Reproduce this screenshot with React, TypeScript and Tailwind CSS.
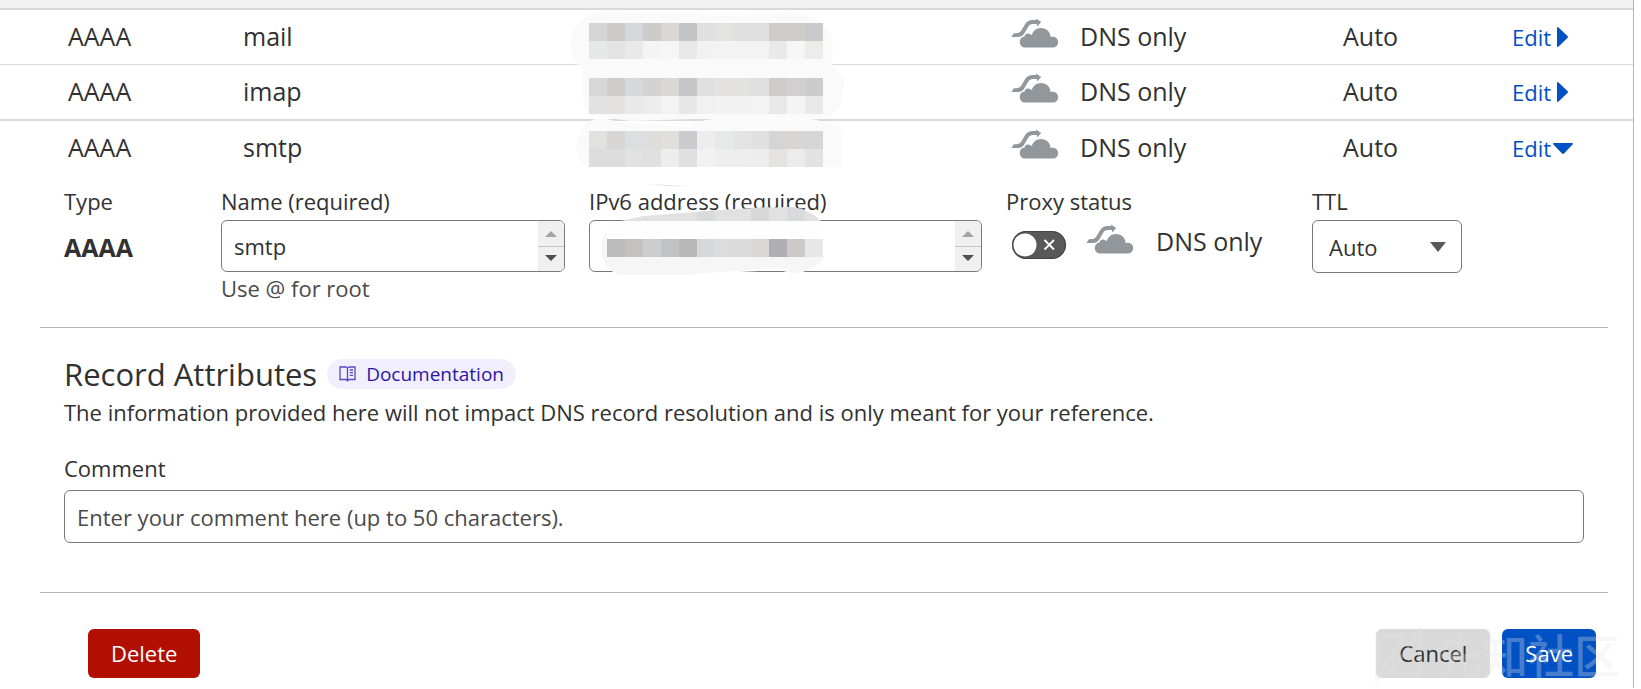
import React from "react";

type RecordRow = {
  type: string;
  name: string;
  tiles: string[][];
  halo: string;
  open: boolean;
};

const records: RecordRow[] = [
  {
    type: "AAAA",
    name: "mail",
    open: false,
    tiles: [
      ["#d3d6d5", "#cdcbca", "#d5d7da", "#cdcbca", "#d9d6d4", "#c3c4c6", "#e0e0e0", "#e3e3e1", "#e0e0e0", "#e0e0e0", "#cfcdcb", "#cfcdca", "#cacacc"],
      ["#e5e8e7", "#e3e3e3", "#e9e9e9", "#f4f4f4", "#f6f6f6", "#e8e8e8", "#f2f2f2", "#f3f3f3", "#f3f3f3", "#f3f3f3", "#e9e9e9", "#f6f6f6", "#ececea"],
    ],
    halo: "M0 14C4 2 14 -10 28 -10L112 -11C150 -5 180 -9 220 -10C242 -9 256 0 262 20C263 34 256 40 266 52L20 50C6 46 -2 34 0 14Z",
  },
  {
    type: "AAAA",
    name: "imap",
    open: false,
    tiles: [
      ["#d6d7d7", "#cfcdcb", "#d6d8db", "#d4d2d3", "#dad8d5", "#c5c6c8", "#e0e0e0", "#e3e2e0", "#e2e2e0", "#e0e0e0", "#cfcdcb", "#d1cfd0", "#cbccce"],
      ["#e2e2e2", "#e3e2e0", "#e9e9e9", "#ededed", "#f3f3f3", "#e5e8e7", "#f1f1f1", "#f2f2f2", "#f2f2f2", "#f3f3f3", "#e8e8e8", "#f4f4f4", "#e9e9e9"],
    ],
    halo: "M12 18C10 4 8 -12 22 -14L248 -15C262 -12 268 -6 274 0L270 26C264 38 254 42 242 40L122 41L60 43L22 38C14 34 12 28 12 18Z",
  },
  {
    type: "AAAA",
    name: "smtp",
    open: true,
    tiles: [
      ["#e1e1df", "#d7d6d5", "#dcdee1", "#deddda", "#e0dfdc", "#cbcbcd", "#ededed", "#e6e9e8", "#e4e4e4", "#e0e0e0", "#d4d5d4", "#d8d6d4", "#d4d6d5"],
      ["#dcdcdc", "#dcdcdc", "#e2e2e2", "#e0e0e0", "#ededed", "#e0e0e0", "#f2f2f2", "#eeeeee", "#eeeeee", "#ededed", "#e4e3e1", "#ececec", "#e2e2e2"],
    ],
    halo: "M10 0C14 -10 24 -14 36 -12L52 -8L119 -4C130 -12 140 -13 160 -12L240 -12C256 -10 268 -2 274 0L270 0L270 36L18 36C2 28 4 12 10 0Z",
  },
];

const addressTiles = ["#babdbc", "#c4c2c0", "#cccdcf", "#c1c2c5", "#b8b8b8", "#d6d8db", "#dcdcdc", "#dbdbdb", "#d8d7d5", "#b0afb5", "#cbcac9", "#e5e8e7"];

function MaskedAddress({ tiles, halo }: { tiles: string[][]; halo: string }) {
  return (
    <svg width="276" height="36" viewBox="0 0 276 36" className="relative -ml-[18px] block overflow-visible" role="img" aria-label="Hidden address">
      <path d={halo} fill="#fafafa" />
      {tiles.map((line, y) =>
        line.map((c, x) => <rect key={`${y}-${x}`} x={18 + x * 18} y={y * 18} width="18" height="18" fill={c} shapeRendering="crispEdges" />)
      )}
    </svg>
  );
}

function CloudIcon() {
  return (
    <svg width="48" height="30" viewBox="11 8 48 30" className="block shrink-0" fill="#92979b" aria-hidden="true">
      <path d="M25.5 37.6C22.2 37.6 19.8 35.2 19.8 32C19.8 28.8 22 26.6 24.6 26.4C25 24 27.2 23 29.6 23.9L31.9 25C32.8 20.8 36.5 18 41 18C46.4 18 50.2 21.7 50.6 27C54.9 25.6 58.2 28.6 58.2 32C58.2 35.4 55.6 37.6 52.6 37.6Z" />
      <path d="M11.4 27.1L13.8 23.3L18 22.9C19.8 22.6 20.9 21.2 22.1 19.2L24.9 14.6C26.7 11.5 29 10 32.6 10L36.2 9.9L36 8.4L41.2 12.1L37.3 16.4L36.9 14L32.8 14.1C30.6 14.1 29.4 14.9 28.2 16.8L25 22.2C23.1 25.5 21 27.1 17.6 27.1Z" />
    </svg>
  );
}

function Stepper({ name }: { name: string }) {
  return (
    <div className="flex w-[26px] shrink-0 flex-col bg-[#f0f0f0] py-px">
      <button type="button" aria-label={`Scroll ${name} up`} className="flex flex-1 items-center justify-center border-b border-[#c4c4c4]">
        <svg width="12" height="6" viewBox="0 0 12 6"><path d="M0 6L6 0L12 6Z" fill="#a3a3a3" /></svg>
      </button>
      <button type="button" aria-label={`Scroll ${name} down`} className="flex flex-1 items-center justify-center">
        <svg width="12" height="6" viewBox="0 0 12 6"><path d="M0 0L6 6L12 0Z" fill="#4f4f4f" /></svg>
      </button>
    </div>
  );
}

const rowClass = [
  "h-[55px] border-t-2 border-[#d9d9d9]",
  "h-14 border-t border-[#d9d9d9]",
  "h-[55px] border-t-2 border-[#d9d9d9]",
];

function RecordsTable() {
  return (
    <table className="w-full table-fixed border-collapse text-left text-[25px] leading-8">
      <colgroup>
        <col className="w-[243px]" />
        <col className="w-[346px]" />
        <col />
        <col className="w-[322px]" />
        <col className="w-[169px]" />
        <col className="w-[121px]" />
      </colgroup>
      <tbody>
        {records.map((r, i) => (
          <tr key={r.name} className={rowClass[i]}>
            <td className="pb-0.5 pl-[68px]">{r.type}</td>
            <td className="pb-0.5">{r.name}</td>
            <td className={r.open ? "pt-0.5" : "pt-2"}><MaskedAddress tiles={r.tiles} halo={r.halo} /></td>
            <td>
              <div className="-ml-2.5 flex items-center gap-[21px]">
                <div className="pb-2"><CloudIcon /></div>
                <span className="pb-0.5">DNS only</span>
              </div>
            </td>
            <td className="pb-0.5">Auto</td>
            <td>
              <button type="button" aria-expanded={r.open} className={r.open ? "flex items-center gap-0.5 text-[22px] text-[#0051c3]" : "flex items-center gap-1.5 text-[22px] text-[#0051c3]"}>
                Edit
                {r.open ? (
                  <svg width="20" height="11" viewBox="0 0 20 11"><path d="M0 1Q0 0 1 0H19Q20 0 20 1L11 10.5Q10 11.4 9 10.5Z" fill="#0051c3" /></svg>
                ) : (
                  <svg width="11" height="20" viewBox="0 0 11 20"><path d="M0 1Q0 0 1 0L10.5 9Q11.4 10 10.5 11L1 20Q0 20 0 19Z" fill="#0051c3" /></svg>
                )}
              </button>
            </td>
          </tr>
        ))}
      </tbody>
    </table>
  );
}

export default function App() {
  return (
    <div className="bg-white pr-[7px] font-['Open_Sans','Noto_Sans_CJK_SC',sans-serif] text-[#313131]">
      <main className="border-r border-[#b5b5b5]">
        <div className="h-2 bg-[#f1f1f1]" />
        <RecordsTable />

        <form className="pr-[41px] pl-10" onSubmit={(e) => e.preventDefault()}>
          <div className="grid grid-cols-[133px_minmax(0,344fr)_minmax(0,393fr)_282px_150px] gap-x-6 pt-3 pb-[25px] pr-[130px] pl-6 text-[22px] leading-7">
            <div>
              <div>Type</div>
              <div className="mt-[18px] text-[25px] leading-7 font-bold">AAAA</div>
            </div>
            <div>
              <label htmlFor="name" className="block">Name (required)</label>
              <div className="mt-[5px] flex h-[52px] overflow-hidden rounded-md border border-[#797979]">
                <input id="name" defaultValue="smtp" className="min-w-0 flex-1 px-3 outline-none" />
                <Stepper name="name" />
              </div>
              <p className="mt-0.5 text-[#4a4a4a]">Use @ for root</p>
            </div>
            <div className="relative">
              <label htmlFor="address" className="block">IPv6 address (required)</label>
              <div className="mt-[5px] flex h-[52px] overflow-hidden rounded-md border border-[#797979]">
                <input id="address" className="min-w-0 flex-1 px-3 outline-none" />
                <Stepper name="address" />
              </div>
              <svg width="250" height="100" viewBox="0 0 250 100" className="pointer-events-none absolute top-px left-0 overflow-visible" aria-hidden="true">
                <path d="M58 -3Q70 -4 80 -3Q92 -1.500 101 -3Q92 -1 82 -2Q70 -3.500 58 -3Z" fill="#dddddd" />
                <path d="M32 33L54 28L108 24L144 21L198 19C212 19 226 26 232 33Z" fill="#e1e1e1" />
                <path d="M108 24L126 22V33H108ZM198 19Q207 19 216 22V33H198Z" fill="#d9dadc" />
                <path d="M162 20L180 19V33H162Z" fill="#d8d8d8" />
                <path d="M18 33H232V68C226 80 214 86 202 85L190 82L130 85L98 87L30 87C18 82 12 70 12 60C12 54 15 48 18 43Z" fill="#fefefe" />
                <path d="M12 60C12 54 15 48 18 43V69H236C228 80 214 86 202 85L190 80L130 84L98 87L30 87C18 82 12 70 12 60Z" fill="#f6f6f6" />
                {addressTiles.map((c, x) => (
                  <rect key={x} x={18 + x * 18} y="51" width="18" height="18" fill={c} shapeRendering="crispEdges" />
                ))}
              </svg>
            </div>
            <div>
              <label htmlFor="proxied">Proxy status</label>
              <div className="mt-2 flex items-center gap-5 pl-1.5">
                <div className="relative mt-2 h-7 w-[54px] shrink-0">
                  <input id="proxied" type="checkbox" role="switch" className="h-7 w-[54px] appearance-none rounded-full bg-[#595959]" />
                  <svg width="54" height="28" viewBox="0 0 54 28" className="pointer-events-none absolute inset-0" aria-hidden="true">
                    <rect x="0.500" y="0.500" width="53" height="27" rx="13.500" fill="none" stroke="#434343" />
                    <circle cx="13" cy="14" r="11.500" fill="#fff" />
                    <path d="M32.500 9L42 18.500M42 9L32.500 18.500" stroke="#fff" strokeWidth="1.800" />
                  </svg>
                </div>
                <div className="flex items-center gap-[22px]">
                  <div className="pb-1"><CloudIcon /></div>
                  <span className="text-[25px] whitespace-nowrap">DNS only</span>
                </div>
              </div>
            </div>
            <div>
              <label htmlFor="ttl" className="block">TTL</label>
              <div className="relative mt-[5px]">
                <select id="ttl" className="h-[53px] w-full appearance-none rounded-md border border-[#797979] bg-white px-4 outline-none">
                  <option>Auto</option>
                </select>
                <svg width="16" height="10" viewBox="0 0 16 10" className="pointer-events-none absolute top-[22px] right-4" aria-hidden="true">
                  <path d="M0 0H16L8 10Z" fill="#595959" />
                </svg>
              </div>
            </div>
          </div>

          <div className="-mr-4 border-y border-[#b6b6b6] pt-[26px] pb-[49px] pr-6 pl-6 text-[22px]">
            <div className="flex items-center gap-2.5">
              <h2 className="text-[31px] leading-10">Record Attributes</h2>
              <a href="#documentation" className="flex h-[30px] items-center gap-2.5 rounded-full bg-[#f1eefd] px-3 text-[19px] text-[#2c16a3]">
                <svg width="17" height="16" viewBox="0 0 17 16" fill="none" stroke="#5a48c0" strokeWidth="1.300" aria-hidden="true">
                  <path d="M8.500 2.200L7 1H1V13.500H7L8.500 14.800L10 13.500H16V1H10ZM8.500 2.200V14.500M10.800 4H14M10.800 6.700H14M10.800 9.400H14" />
                </svg>
                Documentation
              </a>
            </div>
            <p className="leading-9">The information provided here will not impact DNS record resolution and is only meant for your reference.</p>
            <label htmlFor="comment" className="mt-[22px] block leading-8">Comment</label>
            <input id="comment" placeholder="Enter your comment here (up to 50 characters)." className="mt-1.5 h-[53px] w-full rounded-md border border-[#797979] px-3 outline-none placeholder:text-[#4a4a4a]" />
          </div>

          <div className="relative -mr-1 flex gap-3 pt-9 pb-[10px] pl-12 text-[22px]">
            <button type="button" className="h-[49px] rounded-md bg-[#b20f03] px-[23px] text-white">Delete</button>
            <button type="button" className="ml-auto h-[49px] rounded-md bg-[#d9d9d9] px-[23px]">Cancel</button>
            <button type="submit" className="h-[49px] rounded-md bg-[#0051c3] px-[23px] text-white">Save</button>
            <div className="pointer-events-none absolute -right-6 bottom-1 flex items-center gap-3 text-[#e6e6e6] opacity-30" aria-hidden="true">
              <svg width="50" height="62" viewBox="0 0 50 62" fill="#e6e6e6">
                <path fillRule="evenodd" d="M1 12H34L3 60H1ZM4 15V50L28 15ZM48 2V52H14ZM44 14L20 49H44Z" />
              </svg>
              <span className="font-['Noto_Sans_CJK_SC',sans-serif] text-[46px] leading-none font-medium">先知社区</span>
            </div>
          </div>
        </form>
      </main>
    </div>
  );
}
